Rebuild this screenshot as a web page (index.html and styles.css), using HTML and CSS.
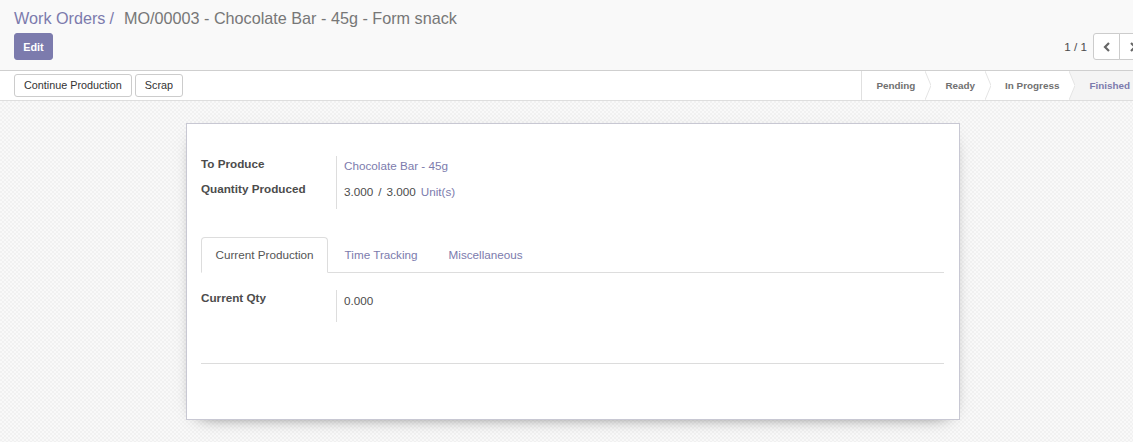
FILE: index.html
```html
<!DOCTYPE html>
<html>
<head>
<meta charset="utf-8">
<title>MO/00003 - Chocolate Bar - 45g - Form snack</title>
<link rel="stylesheet" href="styles.css">
</head>
<body>
<div class="control-panel">
  <ol class="breadcrumb">
    <li class="bc-link">Work Orders</li>
    <li class="bc-sep">/</li>
    <li class="bc-active">MO/00003 - Chocolate Bar - 45g - Form snack</li>
  </ol>
  <div class="cp-bottom">
    <button class="btn-edit">Edit</button>
    <div class="pager">
      <span class="pager-value">1 / 1</span>
      <div class="pager-btns">
        <button class="pager-btn"><svg width="8" height="10" viewBox="0 0 8 10"><path d="M6 1 L2 5 L6 9" fill="none" stroke="#666" stroke-width="2.2"/></svg></button>
        <button class="pager-btn"><svg width="8" height="10" viewBox="0 0 8 10"><path d="M2 1 L6 5 L2 9" fill="none" stroke="#666" stroke-width="2.2"/></svg></button>
      </div>
    </div>
  </div>
</div>
<div class="statusbar">
  <div class="sb-buttons">
    <button class="btn">Continue Production</button>
    <button class="btn">Scrap</button>
  </div>
  <div class="sb-status">
    <span class="step">Pending</span>
    <svg class="chev" width="6" height="29" viewBox="0 0 6 29"><polyline points="0,0 6,14.5 0,29" fill="none" stroke="#e4e4e4"/></svg>
    <span class="step">Ready</span>
    <svg class="chev" width="6" height="29" viewBox="0 0 6 29"><polyline points="0,0 6,14.5 0,29" fill="none" stroke="#e4e4e4"/></svg>
    <span class="step">In Progress</span>
    <svg class="chev" width="6" height="29" viewBox="0 0 6 29"><polygon points="0,0 6,14.5 0,29 6,29 6,0" fill="#f4f4f4"/><polyline points="0,0 6,14.5 0,29" fill="none" stroke="#e4e4e4"/></svg>
    <span class="step active">Finished</span>
  </div>
</div>
<div class="sheet-bg">
  <div class="sheet">
    <div class="group">
      <div class="row r1">
        <div class="label">To Produce</div>
        <div class="value"><span class="link">Chocolate Bar - 45g</span></div>
      </div>
      <div class="row r2">
        <div class="label">Quantity Produced</div>
        <div class="value">3.000<span class="sep">/</span>3.000<span class="link unit">Unit(s)</span></div>
      </div>
    </div>
    <div class="tabs">
      <div class="tab active">Current Production</div>
      <div class="tab">Time Tracking</div>
      <div class="tab">Miscellaneous</div>
    </div>
    <div class="group tab-group">
      <div class="row r3">
        <div class="label">Current Qty</div>
        <div class="value">0.000</div>
      </div>
    </div>
    <div class="hr"></div>
  </div>
</div>
</body>
</html>
```

FILE: styles.css
```css
html, body {
  margin: 0;
  padding: 0;
  overflow: hidden;
}
body {
  font-family: "Liberation Sans", Arial, sans-serif;
  font-size: 11.7px;
  color: #4c4c4c;
  background: #f4f4f4;
  height: 442px;
}
button {
  font-family: inherit;
  cursor: pointer;
}

/* control panel */
.control-panel {
  background: #f9f9f9;
  border-bottom: 1px solid #cfcfcf;
  padding-left: 14px;
  box-sizing: border-box;
  height: 71px;
  padding-top: 7px;
  overflow: hidden;
}
.breadcrumb {
  list-style: none;
  margin: 0;
  padding: 0;
  display: flex;
  font-size: 16.2px;
  line-height: 22px;
  white-space: nowrap;
}
.bc-link { color: #7c7bad; }
.bc-sep { color: #7c7bad; padding: 0 10px 0 4px; }
.bc-active { color: #777; }

.cp-bottom {
  display: flex;
  justify-content: space-between;
  align-items: center;
  margin-top: 4px;
}
.btn-edit {
  background: #7c7bad;
  border: 1px solid #7c7bad;
  color: #fff;
  font-weight: bold;
  font-size: 10.8px;
  height: 27px;
  width: 39px;
  padding: 0;
  border-radius: 3px;
}
.pager {
  display: flex;
  align-items: center;
  margin-right: -13px;
}
.pager-value {
  color: #4c4c4c;
  margin-right: 6px;
}
.pager-btns { display: flex; }
.pager-btn {
  width: 27px;
  height: 27px;
  background: #fff;
  border: 1px solid #ccc;
  padding: 0;
  display: flex;
  align-items: center;
  justify-content: center;
}
.pager-btn:first-child { border-radius: 3px 0 0 3px; }
.pager-btn + .pager-btn { margin-left: -1px; border-radius: 0 3px 3px 0; }

/* status bar */
.statusbar {
  display: flex;
  justify-content: space-between;
  background: #fff;
  border-bottom: 1px solid #dedede;
  height: 30px;
  box-sizing: border-box;
  padding-left: 14px;
  overflow: hidden;
}
.sb-buttons {
  display: flex;
  gap: 3px;
  align-items: center;
}
.btn {
  background: #fff;
  border: 1px solid #ccc;
  border-radius: 3px;
  color: #333;
  font-size: 10.8px;
  height: 23px;
  padding: 0 9px;
  line-height: 21px;
}
.sb-status {
  display: flex;
  border-left: 1px solid #e0e0e0;
  height: 29px;
}
.step {
  display: flex;
  align-items: center;
  padding: 0 9.5px 0 14.5px;
  font-weight: bold;
  font-size: 9.9px;
  color: #707070;
  white-space: nowrap;
}
.step.active {
  background: #f4f4f4;
  color: #7c7bad;
  padding-right: 3px;
}
.chev { display: block; flex: none; }

/* sheet */
.sheet-bg {
  background-color: #f6f6f6;
  background-image: repeating-conic-gradient(#f1f1f1 0 25%, #f9f9f9 0 50%);
  background-size: 4px 4px;
  height: 341px;
  padding-top: 22px;
  box-sizing: border-box;
}
.sheet {
  margin-left: 186px;
  width: 774px;
  height: 297px;
  box-sizing: border-box;
  background: #fff;
  border: 1px solid #c8c8d3;
  box-shadow: 0 5px 18px -13px #000;
  padding: 32px 15px 0 14px;
}
.row {
  display: grid;
  grid-template-columns: 136px 1fr;
}
.r1 { height: 25px; }
.r2 { height: 28px; }
.r3 { height: 32px; }
.label {
  font-weight: bold;
  line-height: 14px;
  padding-top: 1px;
  border-right: 1px solid #ddd;
  color: #4c4c4c;
}
.value {
  padding-left: 7px;
  padding-top: 1px;
  line-height: 17px;
  color: #4c4c4c;
}
.r2 .value { padding-top: 2px; }
.r3 .value { padding-top: 2px; }
.link { color: #7c7bad; }
.sep { margin: 0 5px; }
.unit { margin-left: 5px; }

.tabs {
  display: flex;
  gap: 2px;
  border-bottom: 1px solid #ddd;
  margin-top: 28px;
  height: 35px;
}
.tab {
  padding: 8px 13.5px 9px;
  line-height: 17px;
  border: 1px solid transparent;
  border-radius: 4px 4px 0 0;
  color: #7c7bad;
  white-space: nowrap;
  height: 36px;
  box-sizing: border-box;
}
.tab.active {
  border-color: #ddd;
  border-bottom-color: #fff;
  background: #fff;
  color: #555;
}
.tab-group { margin-top: 17px; }
.hr {
  margin-top: 41px;
  border-top: 1px solid #dcdcdc;
}
```
